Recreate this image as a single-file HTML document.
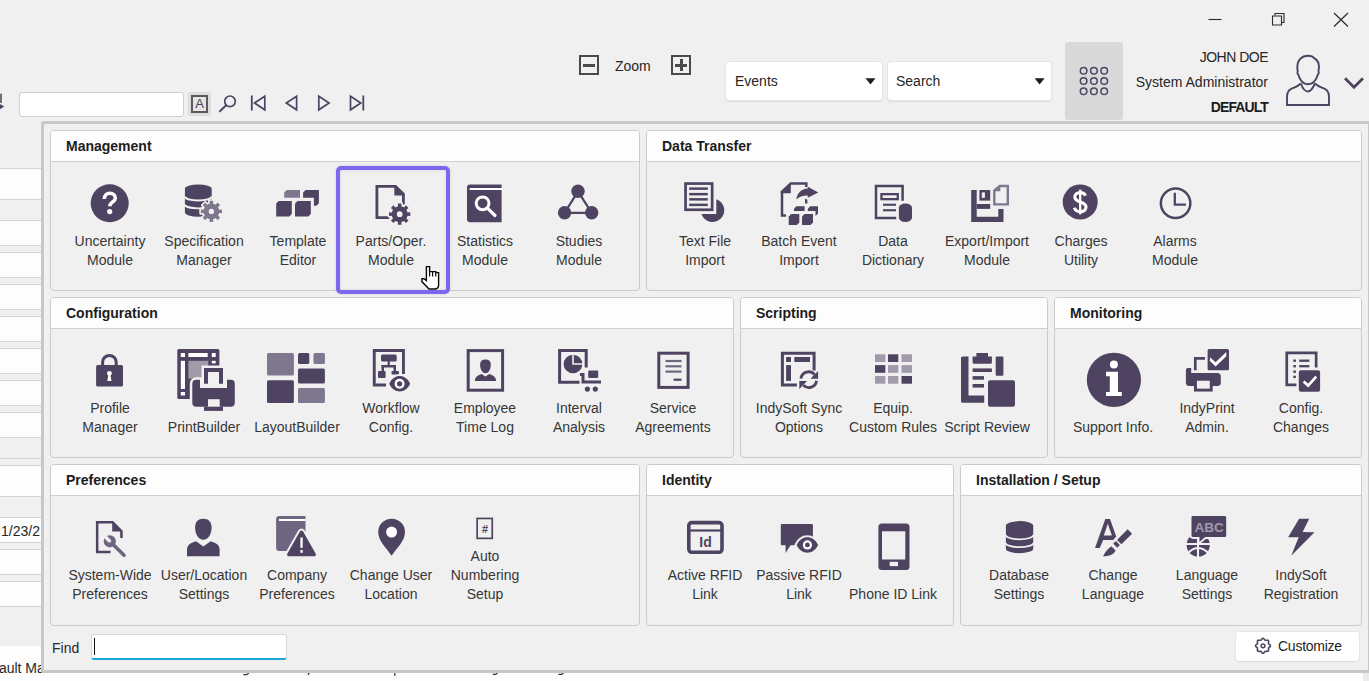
<!DOCTYPE html><html><head><meta charset="utf-8"><style>
*{box-sizing:border-box}
html,body{margin:0;padding:0}
body{width:1369px;height:681px;overflow:hidden;background:#f0f0f0;position:relative;font-family:"Liberation Sans",sans-serif;color:#262626}
.a{position:absolute}
.sec{position:absolute;border:1px solid #cbcbcb;border-radius:4px;background:#f0f0f0;overflow:hidden}
.sec .hd{position:absolute;left:0;top:0;right:0;height:31px;background:#fdfdfd;border-bottom:1px solid #d0d0d0;font-weight:bold;font-size:14px;line-height:30px;padding-left:15px;color:#1c1c1c}
.lbl{position:absolute;width:110px;text-align:center;font-size:14px;line-height:19px;color:#363636;white-space:nowrap}
.row{position:absolute;left:0;width:41px;background:#fdfdfd;border-top:1px solid #d4d4d4;border-bottom:1px solid #d4d4d4}
</style></head><body><div class="a" style="left:0;top:0;width:1369px;height:681px;background:#f0f0f0"></div>
<div class="row" style="top:168px;height:32px"></div>
<div class="row" style="top:220px;height:26px"></div>
<div class="row" style="top:252px;height:26px"></div>
<div class="row" style="top:284px;height:26px"></div>
<div class="row" style="top:316px;height:26px"></div>
<div class="row" style="top:348px;height:26px"></div>
<div class="row" style="top:380px;height:26px"></div>
<div class="row" style="top:412px;height:26px"></div>
<div class="row" style="top:465px;height:32px"></div>
<div class="row" style="top:517px;height:26px"></div>
<div class="row" style="top:549px;height:26px"></div>
<div class="row" style="top:581px;height:26px"></div>
<div class="a" style="left:0;top:199px;width:41px;height:22px;border-top:1px solid #d4d4d4;border-bottom:1px solid #d4d4d4"></div>
<div class="a" style="left:0;top:437px;width:41px;height:22px;border-top:1px solid #d4d4d4;border-bottom:1px solid #d4d4d4"></div>
<div class="a" style="left:0;top:496px;width:41px;height:22px;border-top:1px solid #d4d4d4;border-bottom:1px solid #d4d4d4"></div>
<div class="a" style="left:0;top:646px;width:1369px;height:35px;background:#fdfdfd"></div>
<div class="a" style="left:1363px;top:673px;width:6px;height:8px;background:#ececec"></div>
<div class="a" style="left:1px;top:522px;font-size:14px;line-height:19px;color:#262626">1/23/2</div>
<div class="a" style="left:-5px;top:659px;font-size:14px;line-height:19px;color:#262626">fault Ma</div>
<svg class="a" style="left:0;top:0" width="1369" height="681"><path d="M243.3,674.6 H247 L249,672.6 M308,675 L309.3,672.6 M394.8,672.6 V676 M492.7,674.4 H495.8 L497.6,672.6 M558.4,674.4 H561.8 L563.6,672.6" fill="none" stroke="#333" stroke-width="1.2"/></svg>
<div class="a" style="left:19px;top:92px;width:165px;height:25px;background:#fff;border:1px solid #cfcfcf;border-radius:3px"></div>
<div class="a" style="left:188px;top:92px;width:23px;height:24px;background:#dcdcdc;border-radius:3px"></div>
<div class="a" style="left:191px;top:95px;width:17px;height:18px;border:2px solid #5a5a5a;background:#e4e4e4"></div>
<div class="a" style="left:191px;top:95px;width:17px;height:18px;font-size:13px;line-height:18px;text-align:center;color:#4e4462">A</div>
<div class="a" style="left:579px;top:55px;width:20px;height:20px;border:2px solid #4a4a4a"></div>
<div class="a" style="left:583px;top:63.5px;width:12px;height:3px;background:#4a4a4a"></div>
<div class="a" style="left:671px;top:55px;width:20px;height:20px;border:2px solid #4a4a4a"></div>
<div class="a" style="left:675px;top:63.5px;width:12px;height:3px;background:#4a4a4a"></div>
<div class="a" style="left:679.5px;top:59px;width:3px;height:12px;background:#4a4a4a"></div>
<div class="a" style="left:615px;top:57px;font-size:14px;line-height:19px;color:#262626">Zoom</div>
<div class="a" style="left:726px;top:62px;width:156px;height:38px;background:#fff;border-radius:3px;box-shadow:0 0 0 1px #e6e6e6, 0 1px 1px 1px #dcdcdc"></div>
<div class="a" style="left:735px;top:72px;font-size:14px;line-height:19px;color:#262626">Events</div>
<div class="a" style="left:888px;top:62px;width:163px;height:38px;background:#fff;border-radius:3px;box-shadow:0 0 0 1px #e6e6e6, 0 1px 1px 1px #dcdcdc"></div>
<div class="a" style="left:896px;top:72px;font-size:14px;line-height:19px;color:#262626">Search</div>
<div class="a" style="left:1065px;top:42px;width:58px;height:78px;background:#d9d9d9;border-radius:3px"></div>
<div class="a" style="left:1100px;top:48px;width:168px;text-align:right;font-size:14px;line-height:19px;color:#262626;letter-spacing:-0.5px">JOHN DOE</div>
<div class="a" style="left:1100px;top:73px;width:168px;text-align:right;font-size:14px;line-height:19px;color:#262626">System Administrator</div>
<div class="a" style="left:1100px;top:98px;width:168px;text-align:right;font-size:14px;line-height:19px;font-weight:bold;color:#1c1c1c;letter-spacing:-0.9px">DEFAULT</div>
<div class="a" style="left:41px;top:121px;width:1330px;height:552px;border:3px solid #c8c8c8;border-radius:3px;background:#f0f0f0"></div>
<div class="sec" style="left:50px;top:130px;width:590px;height:161px"><div class="hd">Management</div></div>
<div class="sec" style="left:646px;top:130px;width:716px;height:161px"><div class="hd">Data Transfer</div></div>
<div class="sec" style="left:50px;top:297px;width:684px;height:161px"><div class="hd">Configuration</div></div>
<div class="sec" style="left:740px;top:297px;width:308px;height:161px"><div class="hd">Scripting</div></div>
<div class="sec" style="left:1054px;top:297px;width:308px;height:161px"><div class="hd">Monitoring</div></div>
<div class="sec" style="left:50px;top:464px;width:590px;height:162px"><div class="hd">Preferences</div></div>
<div class="sec" style="left:646px;top:464px;width:308px;height:162px"><div class="hd">Identity</div></div>
<div class="sec" style="left:960px;top:464px;width:402px;height:162px"><div class="hd">Installation / Setup</div></div>
<div class="lbl" style="left:55px;top:231.7px">Uncertainty<br>Module</div>
<div class="lbl" style="left:149px;top:231.7px">Specification<br>Manager</div>
<div class="lbl" style="left:243px;top:231.7px">Template<br>Editor</div>
<div class="lbl" style="left:336px;top:231.7px">Parts/Oper.<br>Module</div>
<div class="lbl" style="left:430px;top:231.7px">Statistics<br>Module</div>
<div class="lbl" style="left:524px;top:231.7px">Studies<br>Module</div>
<div class="lbl" style="left:650px;top:231.7px">Text File<br>Import</div>
<div class="lbl" style="left:744px;top:231.7px">Batch Event<br>Import</div>
<div class="lbl" style="left:838px;top:231.7px">Data<br>Dictionary</div>
<div class="lbl" style="left:932px;top:231.7px">Export/Import<br>Module</div>
<div class="lbl" style="left:1026px;top:231.7px">Charges<br>Utility</div>
<div class="lbl" style="left:1120px;top:231.7px">Alarms<br>Module</div>
<div class="lbl" style="left:55px;top:398.6px">Profile<br>Manager</div>
<div class="lbl" style="left:149px;top:417.6px">PrintBuilder</div>
<div class="lbl" style="left:242px;top:417.6px">LayoutBuilder</div>
<div class="lbl" style="left:336px;top:398.6px">Workflow<br>Config.</div>
<div class="lbl" style="left:430px;top:398.6px">Employee<br>Time Log</div>
<div class="lbl" style="left:524px;top:398.6px">Interval<br>Analysis</div>
<div class="lbl" style="left:618px;top:398.6px">Service<br>Agreements</div>
<div class="lbl" style="left:744px;top:398.6px">IndySoft Sync<br>Options</div>
<div class="lbl" style="left:838px;top:398.6px">Equip.<br>Custom Rules</div>
<div class="lbl" style="left:932px;top:417.6px">Script Review</div>
<div class="lbl" style="left:1058px;top:417.6px">Support Info.</div>
<div class="lbl" style="left:1152px;top:398.6px">IndyPrint<br>Admin.</div>
<div class="lbl" style="left:1246px;top:398.6px">Config.<br>Changes</div>
<div class="lbl" style="left:55px;top:565.6px">System-Wide<br>Preferences</div>
<div class="lbl" style="left:149px;top:565.6px">User/Location<br>Settings</div>
<div class="lbl" style="left:242px;top:565.6px">Company<br>Preferences</div>
<div class="lbl" style="left:336px;top:565.6px">Change User<br>Location</div>
<div class="lbl" style="left:430px;top:546.6px">Auto<br>Numbering<br>Setup</div>
<div class="lbl" style="left:650px;top:565.6px">Active RFID<br>Link</div>
<div class="lbl" style="left:744px;top:565.6px">Passive RFID<br>Link</div>
<div class="lbl" style="left:838px;top:584.6px">Phone ID Link</div>
<div class="lbl" style="left:964px;top:565.6px">Database<br>Settings</div>
<div class="lbl" style="left:1058px;top:565.6px">Change<br>Language</div>
<div class="lbl" style="left:1152px;top:565.6px">Language<br>Settings</div>
<div class="lbl" style="left:1246px;top:565.6px">IndySoft<br>Registration</div>
<div class="a" style="left:336px;top:166px;width:114px;height:128px;border:4px solid #7b68ee;border-radius:5px;box-shadow:0 0 3px rgba(0,0,0,0.12), inset 0 0 3px rgba(0,0,0,0.12)"></div>
<div class="a" style="left:52px;top:638.5px;font-size:14px;line-height:19px;color:#262626">Find</div>
<div class="a" style="left:91px;top:634px;width:196px;height:26px;background:#fff;border:1px solid #d8d8d8;border-bottom:2px solid #1aa7d8;border-radius:3px"></div>
<div class="a" style="left:94px;top:638px;width:1px;height:17px;background:#111"></div>
<div class="a" style="left:1236px;top:632px;width:123px;height:29px;background:#fff;border-radius:3px;box-shadow:0 1px 0 #dcdcdc, 0 0 0 1px #e6e6e6"></div>
<div class="a" style="left:1278px;top:637px;font-size:14px;line-height:19px;color:#262626;letter-spacing:-0.25px">Customize</div>
<svg class="a" style="left:0;top:0" width="1369" height="681" viewBox="0 0 1369 681"><rect x="0" y="93.7" width="2" height="9.3" rx="0" fill="#6a7478" />
<path d="M0,104 L4.2,106.5 L0,109.2 Z" fill="#4e4462" />
<path d="M1208.5,19.5 H1221.5" fill="none" stroke="#2b2b2b" stroke-width="1.1" />
<path d="M1272.5,16 H1281.5 V25 H1272.5 Z" fill="none" stroke="#2b2b2b" stroke-width="1.1" />
<path d="M1275,15.5 V13.5 H1284 V22.5 H1282" fill="none" stroke="#2b2b2b" stroke-width="1.1" />
<path d="M1334,13 L1348,26.5 M1348,13 L1334,26.5" fill="none" stroke="#2b2b2b" stroke-width="1.2" />
<circle cx="1083.6" cy="70.7" r="3.3" fill="none" stroke="#4e4462" stroke-width="1.5"/>
<circle cx="1083.6" cy="81.0" r="3.3" fill="none" stroke="#4e4462" stroke-width="1.5"/>
<circle cx="1083.6" cy="91.30000000000001" r="3.3" fill="none" stroke="#4e4462" stroke-width="1.5"/>
<circle cx="1093.8999999999999" cy="70.7" r="3.3" fill="none" stroke="#4e4462" stroke-width="1.5"/>
<circle cx="1093.8999999999999" cy="81.0" r="3.3" fill="none" stroke="#4e4462" stroke-width="1.5"/>
<circle cx="1093.8999999999999" cy="91.30000000000001" r="3.3" fill="none" stroke="#4e4462" stroke-width="1.5"/>
<circle cx="1104.1999999999998" cy="70.7" r="3.3" fill="none" stroke="#4e4462" stroke-width="1.5"/>
<circle cx="1104.1999999999998" cy="81.0" r="3.3" fill="none" stroke="#4e4462" stroke-width="1.5"/>
<circle cx="1104.1999999999998" cy="91.30000000000001" r="3.3" fill="none" stroke="#4e4462" stroke-width="1.5"/>
<path d="M1308,55.8 C1301.5,55.8 1297.3,60.5 1297.3,67 C1297.3,69 1297.5,70.5 1297.8,71.5 C1297,72.5 1297.5,74 1298.3,74.5 C1300,80.5 1303.5,84.3 1308,84.3 C1312.5,84.3 1316.2,80.5 1317.8,74.5 C1318.6,74 1319.2,72.5 1318.5,71.5 C1319.2,69 1319.2,66 1318.5,63 C1317,60 1316,58.8 1314.5,58.5 C1313,56.5 1310.5,55.8 1308,55.8 Z" fill="none" stroke="#4e4462" stroke-width="1.9" />
<path d="M1300.8,83.5 C1302.5,88 1305,91.5 1307.8,91.5 C1310.5,91.5 1313,88 1315,83.5" fill="none" stroke="#4e4462" stroke-width="1.9" />
<path d="M1300.8,83.5 C1298,86.5 1294,87.5 1291.5,88.7 C1288,90.3 1287,93 1287,97 V105 H1329 V97 C1329,93 1328,90.3 1324.5,88.7 C1322,87.5 1318,86.5 1315,83.5" fill="none" stroke="#4e4462" stroke-width="1.9" />
<path d="M1345,78.3 L1354,87.3 L1363,78.3" fill="none" stroke="#4e4462" stroke-width="2.8" />
<path d="M865.5,78.3 H875.5 L870.5,84.5 Z" fill="#1e1e1e" />
<path d="M1034.6,78.3 H1044.6 L1039.6,84.5 Z" fill="#1e1e1e" />
<circle cx="230" cy="101.3" r="5.3" fill="none" stroke="#4e4462" stroke-width="1.7"/>
<path d="M226.2,105.3 L219.3,111.7" fill="none" stroke="#4e4462" stroke-width="1.9" />
<path d="M251.8,95.5 V110.5" fill="none" stroke="#4e4462" stroke-width="1.8" />
<path d="M264.8,96.2 L254.5,103 L264.8,109.8 Z" fill="none" stroke="#4e4462" stroke-width="1.7" stroke-linejoin="miter"/>
<path d="M296.6,96.2 L286.3,103 L296.6,109.8 Z" fill="none" stroke="#4e4462" stroke-width="1.7" />
<path d="M318.8,96.2 L329.1,103 L318.8,109.8 Z" fill="none" stroke="#4e4462" stroke-width="1.7" />
<path d="M350.5,96.2 L360.8,103 L350.5,109.8 Z" fill="none" stroke="#4e4462" stroke-width="1.7" />
<path d="M363.3,95.5 V110.5" fill="none" stroke="#4e4462" stroke-width="1.8" />
<circle cx="109.7" cy="203.3" r="19" fill="#4e4462" />
<path d="M104.3,199 C104.3,195.2 106.8,193.2 109.8,193.2 C113,193.2 115.3,195.2 115.3,198.2 C115.3,201.8 109.8,202 109.8,206.2" fill="none" stroke="#ffffff" stroke-width="3.6" />
<circle cx="109.7" cy="211.6" r="2.6" fill="#ffffff" />
<path d="M184.9,188.7 A13.4,4.1 0 0 1 211.7,188.7 V212.6 A13.4,4.1 0 0 1 184.9,212.6 Z" fill="#4e4462" />
<path d="M184.5,196.6 A13.8,4.3 0 0 0 212,196.6" fill="none" stroke="#f0f0f0" stroke-width="1.9" />
<path d="M184.5,204.4 A13.8,4.3 0 0 0 212,204.4" fill="none" stroke="#f0f0f0" stroke-width="1.9" />
<path d="M208.38,204.10 L209.81,203.66 L209.52,200.87 L213.28,200.87 L212.99,203.66 L214.42,204.10 L215.74,204.80 L217.52,202.62 L220.18,205.28 L218.00,207.06 L218.70,208.38 L219.14,209.81 L221.93,209.52 L221.93,213.28 L219.14,212.99 L218.70,214.42 L218.00,215.74 L220.18,217.52 L217.52,220.18 L215.74,218.00 L214.42,218.70 L212.99,219.14 L213.28,221.93 L209.52,221.93 L209.81,219.14 L208.38,218.70 L207.06,218.00 L205.28,220.18 L202.62,217.52 L204.80,215.74 L204.10,214.42 L203.66,212.99 L200.87,213.28 L200.87,209.52 L203.66,209.81 L204.10,208.38 L204.80,207.06 L202.62,205.28 L205.28,202.62 L207.06,204.80 Z" fill="#f0f0f0" stroke="#f0f0f0" stroke-width="3.2" stroke-linejoin="round"/>
<path d="M208.38,204.10 L209.81,203.66 L209.52,200.87 L213.28,200.87 L212.99,203.66 L214.42,204.10 L215.74,204.80 L217.52,202.62 L220.18,205.28 L218.00,207.06 L218.70,208.38 L219.14,209.81 L221.93,209.52 L221.93,213.28 L219.14,212.99 L218.70,214.42 L218.00,215.74 L220.18,217.52 L217.52,220.18 L215.74,218.00 L214.42,218.70 L212.99,219.14 L213.28,221.93 L209.52,221.93 L209.81,219.14 L208.38,218.70 L207.06,218.00 L205.28,220.18 L202.62,217.52 L204.80,215.74 L204.10,214.42 L203.66,212.99 L200.87,213.28 L200.87,209.52 L203.66,209.81 L204.10,208.38 L204.80,207.06 L202.62,205.28 L205.28,202.62 L207.06,204.80 Z M214.10,211.40 A2.7,2.7 0 1 0 208.70,211.40 A2.7,2.7 0 1 0 214.10,211.40 Z" fill="#7f778e" fill-rule="evenodd"/>
<path d="M284.2,197.7 V192.5 L286.7,190 H300 V197.7 Z" fill="#7f778e" />
<path d="M303.1,197.7 V192.5 L305.6,190 H318.9 V203.3 L316.4,205.8 H313.9 V197.7 Z" fill="#4e4462" />
<path d="M276.2,216.6 V203.5 L278.7,201 H291.8 V214.1 L289.3,216.6 Z" fill="#4e4462" />
<path d="M295,216.6 V203.5 L297.5,201 H310.8 V214.1 L308.3,216.6 Z" fill="#4e4462" />
<path d="M389.3,217.7 H376.9 V186.3 H395.5 L403.4,194.2 V204.5" fill="none" stroke="#4e4462" stroke-width="2.8" />
<path d="M394.3,185 L404.8,195.5 H394.3 Z" fill="#4e4462" />
<path d="M396.64,206.81 L398.09,206.36 L397.80,203.57 L401.60,203.57 L401.31,206.36 L402.76,206.81 L404.10,207.52 L405.88,205.34 L408.56,208.02 L406.38,209.80 L407.09,211.14 L407.54,212.59 L410.33,212.30 L410.33,216.10 L407.54,215.81 L407.09,217.26 L406.38,218.60 L408.56,220.38 L405.88,223.06 L404.10,220.88 L402.76,221.59 L401.31,222.04 L401.60,224.83 L397.80,224.83 L398.09,222.04 L396.64,221.59 L395.30,220.88 L393.52,223.06 L390.84,220.38 L393.02,218.60 L392.31,217.26 L391.86,215.81 L389.07,216.10 L389.07,212.30 L391.86,212.59 L392.31,211.14 L393.02,209.80 L390.84,208.02 L393.52,205.34 L395.30,207.52 Z" fill="#f0f0f0" stroke="#f0f0f0" stroke-width="3" stroke-linejoin="round"/>
<path d="M396.64,206.81 L398.09,206.36 L397.80,203.57 L401.60,203.57 L401.31,206.36 L402.76,206.81 L404.10,207.52 L405.88,205.34 L408.56,208.02 L406.38,209.80 L407.09,211.14 L407.54,212.59 L410.33,212.30 L410.33,216.10 L407.54,215.81 L407.09,217.26 L406.38,218.60 L408.56,220.38 L405.88,223.06 L404.10,220.88 L402.76,221.59 L401.31,222.04 L401.60,224.83 L397.80,224.83 L398.09,222.04 L396.64,221.59 L395.30,220.88 L393.52,223.06 L390.84,220.38 L393.02,218.60 L392.31,217.26 L391.86,215.81 L389.07,216.10 L389.07,212.30 L391.86,212.59 L392.31,211.14 L393.02,209.80 L390.84,208.02 L393.52,205.34 L395.30,207.52 Z M402.60,214.20 A2.9,2.9 0 1 0 396.80,214.20 A2.9,2.9 0 1 0 402.60,214.20 Z" fill="#4e4462" fill-rule="evenodd"/>
<path d="M470,184.6 H501.6 V222.3 H470 A3,3 0 0 1 467,219.3 V187.6 A3,3 0 0 1 470,184.6 Z" fill="#4e4462" />
<path d="M470.5,189 H501.8" fill="none" stroke="#ffffff" stroke-width="2.2" stroke-linecap="round"/>
<circle cx="482.6" cy="203.3" r="6.4" fill="none" stroke="#ffffff" stroke-width="3"/>
<path d="M487.4,208.2 L495,215.5" fill="none" stroke="#ffffff" stroke-width="3.2" stroke-linecap="round"/>
<path d="M578,191.3 L564.6,212.8 H591.7 Z" fill="none" stroke="#4e4462" stroke-width="2.2" />
<circle cx="578" cy="191.3" r="6.7" fill="#4e4462" />
<circle cx="564.6" cy="212.8" r="6.7" fill="#4e4462" />
<circle cx="591.7" cy="212.8" r="6.7" fill="#4e4462" />
<rect x="685.55" y="183.55" width="26.6" height="26.2" rx="0" fill="none" stroke="#4e4462" stroke-width="2.7"/>
<rect x="689.2" y="187.4" width="18.6" height="2.5" rx="0" fill="#4e4462" />
<rect x="689.2" y="192.9" width="18.6" height="2.5" rx="0" fill="#4e4462" />
<rect x="689.2" y="198.1" width="18.6" height="2.5" rx="0" fill="#4e4462" />
<rect x="689.2" y="203.6" width="18.6" height="2.5" rx="0" fill="#4e4462" />
<path d="M716.3,199.2 A11.7,11.7 0 1 1 701.5,214 H716.3 Z" fill="#4e4462" />
<path d="M786,215.6 H782 V191.8 L790.8,183.4 H806.3 V187" fill="none" stroke="#4e4462" stroke-width="2.5" />
<path d="M790.8,182.2 V193.2 H780.7 V191.6 Z" fill="#4e4462" />
<path d="M796.3,199.6 C797.3,192.5 801.8,189 807.8,188.6 V186.8 L818.3,192.4 L807.8,197.8 V195.6 C803,195.5 799,196.8 796.3,199.6 Z" fill="#4e4462" />
<path d="M805,198.4 L807.4,199.8 V203.4 H805 Z" fill="#4e4462" />
<path d="M794,211.1 V208.7 L796.4,206.2 H804.6 V211.1 Z" fill="#4e4462" />
<path d="M807.8,211.1 V208.7 L810.2,206.2 H818 V213.5 L815.5,216 V211.1 Z" fill="#4e4462" />
<path d="M788.7,224.9 V216.5 L791.2,214 H799.3 V222.4 L796.8,224.9 Z" fill="#4e4462" />
<path d="M802,224.9 V216.5 L804.5,214 H813 V222.4 L810.5,224.9 Z" fill="#4e4462" />
<path d="M896.2,218.1 H876 V186.1 H902.6 V200.7" fill="none" stroke="#4e4462" stroke-width="2.5" />
<rect x="881.45" y="194.15" width="16.3" height="5" rx="0" fill="none" stroke="#4e4462" stroke-width="2.3"/>
<rect x="883" y="203.7" width="13" height="2.1" rx="0" fill="#4e4462" />
<rect x="883" y="209.2" width="13" height="2.1" rx="0" fill="#4e4462" />
<rect x="898.9" y="203.4" width="13.1" height="18.6" rx="6.5" ry="4.2" fill="#f0f0f0" stroke="#f0f0f0" stroke-width="3.0"/>
<rect x="898.9" y="203.4" width="13.1" height="18.6" rx="6.5" ry="4.2" fill="#4e4462"/>
<path d="M971.2,190 H976.7 V216.8 H998.3 V208.9 H1003.5 V222 H971.2 Z" fill="#4e4462" />
<rect x="979.4" y="190" width="10.8" height="10.6" rx="0" fill="#4e4462" />
<rect x="981.8" y="192.4" width="3.1" height="5.5" rx="0" fill="#f0f0f0" />
<rect x="976.7" y="204" width="13.5" height="4.9" rx="0" fill="#4e4462" />
<path d="M994.3,204.4 V190.6 L999.8,186 H1007.8 V204.4 Z" fill="none" stroke="#7f778e" stroke-width="2.4" />
<path d="M1000.3,184.8 V191.2 H993.6 Z" fill="#7f778e" />
<circle cx="1080.2" cy="202" r="17.5" fill="#4e4462" />
<path d="M1085.6,195.6 C1084.6,193.4 1082.6,192.6 1080.2,192.6 C1076.8,192.6 1074.8,194.5 1074.8,197 C1074.8,203.2 1086,200.8 1086,207.1 C1086,209.9 1083.6,211.6 1080.2,211.6 C1077.2,211.6 1075.2,210.2 1074.3,207.7" fill="none" stroke="#ffffff" stroke-width="3.1" />
<path d="M1080.2,189.6 V214.4" fill="none" stroke="#ffffff" stroke-width="2.3" />
<circle cx="1175.6" cy="203.2" r="14.75" fill="none" stroke="#4e4462" stroke-width="2.5"/>
<path d="M1174.8,192.8 V204.7 H1186" fill="none" stroke="#4e4462" stroke-width="2.3" />
<path d="M102.6,366.5 V362.2 A6.8,6.8 0 0 1 116.2,362.2 V366.5" fill="none" stroke="#4e4462" stroke-width="3" />
<rect x="96.1" y="365.1" width="26.9" height="21.4" rx="1.5" fill="#4e4462" />
<circle cx="109.4" cy="373.3" r="2.4" fill="#ffffff" />
<path d="M108.4,374.5 H110.4 L111.5,380.9 H107.3 Z" fill="#ffffff" />
<rect x="177.3" y="349.1" width="42.1" height="49.9" rx="1.5" fill="#4e4462" />
<rect x="180.8" y="353" width="4.2" height="4" rx="0" fill="#ffffff" />
<rect x="188.4" y="353" width="19.3" height="4" rx="0" fill="#ffffff" />
<rect x="211.8" y="353" width="3.9" height="4" rx="0" fill="#ffffff" />
<rect x="180.8" y="360.8" width="4.2" height="28.2" rx="0" fill="#ffffff" />
<rect x="180.8" y="392" width="4.2" height="3.5" rx="0" fill="#ffffff" />
<rect x="211.8" y="360.8" width="3.9" height="2.6" rx="0" fill="#ffffff" />
<rect x="188.4" y="360.8" width="19.9" height="17.8" rx="0" fill="#a09aaa" />
<path d="M196.3,379.7 H230.8 A4,4 0 0 1 234.8,383.7 V402.8 A4,4 0 0 1 230.8,406.8 H196.3 A4,4 0 0 1 192.3,402.8 V383.7 A4,4 0 0 1 196.3,379.7 Z M204,368.1 H223 V383 H204 Z" fill="#f0f0f0" stroke="#f0f0f0" stroke-width="5"/>
<path d="M196.3,379.7 H200 V387.9 H227 V379.7 H230.8 A4,4 0 0 1 234.8,383.7 V402.8 A4,4 0 0 1 230.8,406.8 H196.3 A4,4 0 0 1 192.3,402.8 V383.7 A4,4 0 0 1 196.3,379.7 Z" fill="#4e4462" />
<path d="M206,383.8 V370.1 H221 V383.8" fill="none" stroke="#4e4462" stroke-width="4" />
<rect x="208" y="399.2" width="11.7" height="7.6" rx="0" fill="#f0f0f0" />
<rect x="204" y="406.8" width="19" height="4.1" rx="0" fill="#4e4462" />
<rect x="267" y="353.1" width="26.9" height="22.5" rx="1.5" fill="#7f778e" />
<rect x="298" y="353.1" width="11.3" height="10.9" rx="1.5" fill="#4e4462" />
<rect x="313.5" y="353.1" width="11.4" height="10.9" rx="1.5" fill="#7f778e" />
<rect x="298" y="368.6" width="26.9" height="14.9" rx="1.5" fill="#4e4462" />
<rect x="267" y="380.3" width="26.9" height="22.6" rx="1.5" fill="#4e4462" />
<rect x="298" y="387.9" width="26.9" height="15" rx="1.5" fill="#7f778e" />
<path d="M386,385.05 H374.25 V350.55 H403.45 V373.9" fill="none" stroke="#4e4462" stroke-width="2.9" />
<rect x="381" y="354.6" width="15.7" height="7" rx="1.5" fill="#4e4462" />
<rect x="387.6" y="361" width="2.2" height="4.5" rx="0" fill="#4e4462" />
<rect x="381.5" y="365" width="14.5" height="2.5" rx="0" fill="#4e4462" />
<rect x="381.5" y="365" width="2.5" height="6" rx="0" fill="#4e4462" />
<rect x="393.5" y="365" width="2.5" height="6" rx="0" fill="#4e4462" />
<rect x="378" y="371" width="7.6" height="7" rx="1" fill="#4e4462" />
<rect x="391.5" y="371" width="7.5" height="3.5" rx="1" fill="#4e4462" />
<path d="M389.2,383.8 C394,373.5 405.4,373.5 410.2,383.8 C405.4,394.1 394,394.1 389.2,383.8 Z" fill="#f0f0f0" stroke="#f0f0f0" stroke-width="3.6" stroke-linejoin="round"/>
<path d="M389.2,383.8 C394,373.5 405.4,373.5 410.2,383.8 C405.4,394.1 394,394.1 389.2,383.8 Z" fill="#4e4462" />
<circle cx="399.6" cy="383.8" r="5" fill="#ffffff" />
<circle cx="399.6" cy="383.8" r="2.6" fill="#4e4462" />
<rect x="468.2" y="350.6" width="34.4" height="39.6" rx="0" fill="none" stroke="#4e4462" stroke-width="3"/>
<path d="M485.4,359.6 C489,359.6 490.8,361.5 490.8,364.5 C490.8,369.5 488.5,373.3 485.4,373.3 C482.3,373.3 480.1,369.5 480.1,364.5 C480.1,361.5 481.8,359.6 485.4,359.6 Z" fill="#4e4462" />
<path d="M474.9,380.9 C475,377 477.5,375.5 481.5,374 L485.4,376.5 L489.3,374 C493.5,375.5 496,377 496.1,380.9 Z" fill="#4e4462" />
<path d="M579.5,382.3 H559.6 V350.6 H586.2 V367.5" fill="none" stroke="#4e4462" stroke-width="3" />
<circle cx="573" cy="364" r="9.35" fill="#4e4462" />
<path d="M573,353.5 V364 H583.5" fill="none" stroke="#f0f0f0" stroke-width="1.6" />
<path d="M580,374.5 H583 V382 H601" fill="none" stroke="#4e4462" stroke-width="3" />
<rect x="588.2" y="370.4" width="10" height="7.6" rx="1" fill="#4e4462" />
<circle cx="587.4" cy="389.1" r="2.6" fill="#4e4462" />
<circle cx="595.3" cy="389.1" r="2.6" fill="#4e4462" />
<rect x="658.8" y="353.2" width="29.3" height="34.2" rx="0" fill="none" stroke="#4e4462" stroke-width="3"/>
<rect x="665.5" y="359.9" width="16" height="2.2" rx="0" fill="#6e6680" />
<rect x="665.5" y="365.2" width="16" height="2.2" rx="0" fill="#6e6680" />
<rect x="665.5" y="370.5" width="16" height="2.2" rx="0" fill="#6e6680" />
<rect x="673.6" y="378.6" width="7.9" height="2.2" rx="0" fill="#4e4462" />
<path d="M796.9,385 H782.4 V353.2 H814.1 V370.4" fill="none" stroke="#4e4462" stroke-width="3" />
<rect x="786.1" y="357" width="4.9" height="5" rx="0" fill="#4e4462" />
<rect x="794.3" y="357" width="15.7" height="5" rx="0" fill="#4e4462" />
<rect x="786.1" y="365.1" width="4.9" height="15.8" rx="0" fill="#4e4462" />
<circle cx="808.9" cy="379.7" r="10" fill="#f0f0f0" />
<path d="M800.9,378.6 A7.8,7.8 0 0 1 814.6,374.6" fill="none" stroke="#4e4462" stroke-width="2.8" />
<path d="M818.1,370.9 V378.7 H810.4 Z" fill="#4e4462" />
<path d="M816.6,380.8 A7.8,7.8 0 0 1 803.4,385.3" fill="none" stroke="#4e4462" stroke-width="2.8" />
<path d="M799.3,381.1 H807.1 L799.3,389 Z" fill="#4e4462" />
<rect x="875" y="354.3" width="10.3" height="7.7" rx="0" fill="#a09aaa" />
<rect x="888" y="354.3" width="10.3" height="7.7" rx="0" fill="#4e4462" />
<rect x="901.5" y="354.3" width="10.5" height="7.7" rx="0" fill="#a09aaa" />
<rect x="875" y="365.1" width="10.3" height="7.7" rx="0" fill="#4e4462" />
<rect x="888" y="365.1" width="10.3" height="7.7" rx="0" fill="#a09aaa" />
<rect x="901.5" y="365.1" width="10.5" height="7.7" rx="0" fill="#a09aaa" />
<rect x="875" y="376" width="10.3" height="7.7" rx="0" fill="#a09aaa" />
<rect x="888" y="376" width="10.3" height="7.7" rx="0" fill="#a09aaa" />
<rect x="901.5" y="376" width="10.5" height="7.7" rx="0" fill="#4e4462" />
<path d="M962.5,356.5 H968.5 V395.6 H984.2 V402.8 H962.5 A1.5,1.5 0 0 1 961,401.3 V358 A1.5,1.5 0 0 1 962.5,356.5 Z" fill="#4e4462" />
<path d="M976.4,353 H988 V356.5 H991.9 V362.2 A1.5,1.5 0 0 1 990.4,363.7 H974.1 A1.5,1.5 0 0 1 972.6,362.2 V356.5 H976.4 Z" fill="#4e4462" />
<rect x="995.7" y="356.5" width="7.7" height="19.3" rx="1" fill="#4e4462" />
<rect x="972.6" y="368.4" width="19.3" height="3.6" rx="0" fill="#4e4462" />
<rect x="972.6" y="376.1" width="11.4" height="3.6" rx="0" fill="#4e4462" />
<rect x="972.6" y="384" width="11.4" height="3.6" rx="0" fill="#4e4462" />
<rect x="988" y="380.2" width="27" height="26.5" rx="2" fill="#4e4462" />
<circle cx="1113.9" cy="379.9" r="27.1" fill="#4e4462" />
<circle cx="1113.9" cy="364.4" r="4" fill="#ffffff" />
<path d="M1106,371.8 H1118 V392 H1121.8 V395.9 H1106 V392 H1109.8 V376.2 H1106 Z" fill="#ffffff" />
<path d="M1195.3,370.3 V358.4 H1205" fill="none" stroke="#4e4462" stroke-width="2.7" />
<path d="M1188,368.1 H1191.2 V372.9 H1217.3 A3.5,3.5 0 0 1 1220.8,376.4 V382.6 A3.5,3.5 0 0 1 1217.3,386.1 H1189.4 A3.5,3.5 0 0 1 1185.9,382.6 V370.2 A2.1,2.1 0 0 1 1188,368.1 Z" fill="#4e4462" />
<rect x="1195.45" y="379.3" width="15.8" height="10.8" rx="0" fill="#f0f0f0" stroke="#4e4462" stroke-width="2.9"/>
<rect x="1207.6" y="349.1" width="21.4" height="21.1" rx="1.5"  fill="#f0f0f0" stroke="#f0f0f0" stroke-width="3.2"/>
<rect x="1207.6" y="349.1" width="21.4" height="21.1" rx="1.5"  fill="#4e4462"/>
<path d="M1209.9,357.2 L1215.6,362.3 L1226.3,352 V356.3 L1215.6,366.5 L1209.9,361 Z" fill="#ffffff" />
<path d="M1296.4,384.85 H1286.75 V352.95 H1316.15 V367.5" fill="none" stroke="#4e4462" stroke-width="2.7" />
<rect x="1293.3" y="359.5" width="2.6" height="2.4" rx="0" fill="#4e4462" />
<rect x="1293.3" y="365.0" width="2.6" height="2.4" rx="0" fill="#4e4462" />
<rect x="1293.3" y="370.5" width="2.6" height="2.4" rx="0" fill="#4e4462" />
<rect x="1293.3" y="375.7" width="2.6" height="2.4" rx="0" fill="#4e4462" />
<rect x="1299.2" y="359.55" width="10.2" height="2.3" rx="0" fill="#4e4462" />
<rect x="1299.2" y="365.05" width="10.2" height="2.3" rx="0" fill="#4e4462" />
<rect x="1298.8" y="370.3" width="21.3" height="21.4" rx="2"  fill="#f0f0f0" stroke="#f0f0f0" stroke-width="3.6"/>
<rect x="1298.8" y="370.3" width="21.3" height="21.4" rx="2"  fill="#4e4462"/>
<path d="M1303.6,381.4 L1308.2,385.6 L1316.2,376.6" fill="none" stroke="#ffffff" stroke-width="2.7" />
<path d="M110.5,552 H97.15 V522.35 H112.6 L121.45,531.2 V538" fill="none" stroke="#4e4462" stroke-width="2.5" />
<path d="M112.2,521.1 L122.7,531.6 H112.2 Z" fill="#4e4462" />
<path d="M109.8,541.3 L124,555.2" fill="none" stroke="#f0f0f0" stroke-width="7" stroke-linecap="round"/>
<circle cx="109.8" cy="541.3" r="8.2" fill="#f0f0f0" />
<path d="M109.8,541.3 L124,555.2" fill="none" stroke="#6e6680" stroke-width="3.6" stroke-linecap="round"/>
<circle cx="109.8" cy="541.3" r="6.1" fill="#6e6680" />
<path d="M109.8,541.3 L104,535.5" fill="none" stroke="#f0f0f0" stroke-width="3.4" />
<circle cx="109.8" cy="541.3" r="1.2" fill="#f0f0f0" />
<path d="M187,556.2 V549.5 C187,545 190,543.3 196,541.2 L203.3,546.6 L210.6,541.2 C216.6,543.3 219.6,545 219.6,549.5 V556.2 Z" fill="#4e4462" />
<path d="M203.3,518.7 C208.5,518.7 211.6,522 211.6,527.5 C211.6,534.5 208,539.7 203.3,539.7 C198.6,539.7 195.1,534.5 195.1,527.5 C195.1,522 198.1,518.7 203.3,518.7 Z" fill="#f0f0f0" stroke="#f0f0f0" stroke-width="2.4" stroke-linejoin="round"/>
<path d="M203.3,518.7 C208.5,518.7 211.6,522 211.6,527.5 C211.6,534.5 208,539.7 203.3,539.7 C198.6,539.7 195.1,534.5 195.1,527.5 C195.1,522 198.1,518.7 203.3,518.7 Z" fill="#4e4462" />
<path d="M279.1,515.9 H305.5 V550.9 H279.1 A3,3 0 0 1 276.1,547.9 V518.9 A3,3 0 0 1 279.1,515.9 Z" fill="#6e6680" />
<path d="M279,520 H305.6" fill="none" stroke="#ffffff" stroke-width="2" />
<path d="M299.9,531.6 Q301.5,529.4 303.1,531.6 L315.6,553.6 Q316.6,556.2 314.2,556.2 H288.8 Q286.4,556.2 287.4,553.6 Z" fill="#f0f0f0" stroke="#f0f0f0" stroke-width="4" stroke-linejoin="round"/>
<path d="M299.9,531.6 Q301.5,529.4 303.1,531.6 L315.6,553.6 Q316.6,556.2 314.2,556.2 H288.8 Q286.4,556.2 287.4,553.6 Z" fill="#4e4462" />
<rect x="300.4" y="537.5" width="2.3" height="10.3" rx="0" fill="#ffffff" />
<rect x="300.4" y="550" width="2.3" height="2.8" rx="0" fill="#ffffff" />
<path d="M391.6,555.8 C386.5,548.3 378.2,541 378.2,532.1 A13.4,13.4 0 0 1 405,532.1 C405,541 396.7,548.3 391.6,555.8 Z" fill="#4e4462" />
<circle cx="391.6" cy="532.1" r="5.5" fill="#ffffff" />
<rect x="477.15" y="518.45" width="15.1" height="19.9" rx="0" fill="none" stroke="#4e4462" stroke-width="1.7"/>
<text x="484.9" y="532.8" font-family="Liberation Sans" font-weight="bold" font-style="italic" font-size="11" text-anchor="middle" fill="#4e4462">#</text>
<rect x="688.8" y="522.6" width="33.2" height="29.7" rx="3" fill="none" stroke="#4e4462" stroke-width="3.6"/>
<rect x="688" y="529.4" width="34.5" height="2.2" rx="0" fill="#4e4462" />
<text x="705.5" y="546.5" font-family="Liberation Sans" font-weight="bold" font-size="14" text-anchor="middle" fill="#4e4462">Id</text>
<path d="M782,523.9 H811.7 A1.2,1.2 0 0 1 812.9,525.1 V545.3 H790.5 L785.6,553 V545.3 H782 A1.2,1.2 0 0 1 780.8,544.1 V525.1 A1.2,1.2 0 0 1 782,523.9 Z" fill="#4e4462" />
<path d="M796.6,544.9 C801.5,534.6 813.2,534.6 818.1,544.9 C813.2,555.2 801.5,555.2 796.6,544.9 Z" fill="#f0f0f0" stroke="#f0f0f0" stroke-width="4" stroke-linejoin="round"/>
<path d="M796.6,544.9 C801.5,534.6 813.2,534.6 818.1,544.9 C813.2,555.2 801.5,555.2 796.6,544.9 Z" fill="#4e4462" />
<circle cx="807.4" cy="544.9" r="4.6" fill="#ffffff" />
<circle cx="807.4" cy="544.9" r="2.4" fill="#4e4462" />
<rect x="878.4" y="523.6" width="31.1" height="46.5" rx="3.5" fill="#4e4462" />
<rect x="882" y="531.3" width="23.3" height="28.2" rx="0" fill="#f0f0f0" />
<rect x="889.7" y="561.8" width="8.3" height="4.3" rx="0" fill="#f0f0f0" />
<path d="M1005.9,525.6 A13.65,4.5 0 0 1 1033.2,525.6 V548.7 A13.65,4.5 0 0 1 1005.9,548.7 Z" fill="#4e4462" />
<path d="M1005.5,534.8 A14,4.5 0 0 0 1033.6,534.8" fill="none" stroke="#f0f0f0" stroke-width="1.8" />
<path d="M1005.5,542.7 A14,4.5 0 0 0 1033.6,542.7" fill="none" stroke="#f0f0f0" stroke-width="1.8" />
<path d="M1095,548 L1105.3,519 H1110 L1116.2,536.5 L1113.2,540 H1103.2 L1099.7,548 Z M1107.8,523.7 L1103.8,535.5 H1111.9 Z" fill="#4e4462" fill-rule="evenodd"/>
<path d="M1127.6,529.3 L1132.1,533.7 L1121.4,544.3 L1117,539.9 Z" fill="#4e4462" />
<path d="M1115.9,541 L1119.9,545.1 L1117.3,547.8 L1113.2,543.7 Z" fill="#4e4462" />
<path d="M1111.3,546.3 L1115.6,550.5 C1113.5,555 1108.5,556.3 1103,556.2 C1105,552.5 1107.5,549 1111.3,546.3 Z" fill="#4e4462" />
<circle cx="1198.2" cy="545" r="11.6" fill="#4e4462" />
<path d="M1186,544 H1210.4 M1198,534 V558 M1187.5,553.5 Q1198,542.5 1208.9,553.5" fill="none" stroke="#f0f0f0" stroke-width="2.1" />
<path d="M1192.5,516.1 H1224.7 A1.5,1.5 0 0 1 1226.2,517.6 V535.6 A1.5,1.5 0 0 1 1224.7,537.1 H1205.2 L1199.5,542 V537.1 H1193 A1.5,1.5 0 0 1 1191.5,535.6 V517.6 A1.5,1.5 0 0 1 1192.5,516.1 Z" fill="#f0f0f0" stroke="#f0f0f0" stroke-width="3.6" stroke-linejoin="round"/>
<path d="M1192.5,516.1 H1224.7 A1.5,1.5 0 0 1 1226.2,517.6 V535.6 A1.5,1.5 0 0 1 1224.7,537.1 H1205.2 L1199.5,542 V537.1 H1193 A1.5,1.5 0 0 1 1191.5,535.6 V517.6 A1.5,1.5 0 0 1 1192.5,516.1 Z" fill="#4e4462" />
<text x="1209.2" y="531.8" font-family="Liberation Sans" font-weight="bold" font-size="13.6" text-anchor="middle" fill="#a09aaa">ABC</text>
<path d="M1299.1,518.7 H1309.2 L1302.6,531.9 L1314.5,532.3 L1291.2,555.7 L1298.7,537.2 H1288.1 Z" fill="#4e4462" />
<path d="M1263.00,638.35 L1263.48,638.47 L1263.92,638.79 L1264.31,639.23 L1264.64,639.69 L1264.94,640.07 L1265.28,640.30 L1265.68,640.37 L1266.16,640.32 L1266.72,640.23 L1267.31,640.19 L1267.85,640.27 L1268.27,640.53 L1268.53,640.95 L1268.61,641.49 L1268.57,642.08 L1268.48,642.64 L1268.43,643.12 L1268.50,643.52 L1268.73,643.86 L1269.11,644.16 L1269.57,644.49 L1270.01,644.88 L1270.33,645.32 L1270.45,645.80 L1270.33,646.28 L1270.01,646.72 L1269.57,647.11 L1269.11,647.44 L1268.73,647.74 L1268.50,648.08 L1268.43,648.48 L1268.48,648.96 L1268.57,649.52 L1268.61,650.11 L1268.53,650.65 L1268.27,651.07 L1267.85,651.33 L1267.31,651.41 L1266.72,651.37 L1266.16,651.28 L1265.68,651.23 L1265.28,651.30 L1264.94,651.53 L1264.64,651.91 L1264.31,652.37 L1263.92,652.81 L1263.48,653.13 L1263.00,653.25 L1262.52,653.13 L1262.08,652.81 L1261.69,652.37 L1261.36,651.91 L1261.06,651.53 L1260.72,651.30 L1260.32,651.23 L1259.84,651.28 L1259.28,651.37 L1258.69,651.41 L1258.15,651.33 L1257.73,651.07 L1257.47,650.65 L1257.39,650.11 L1257.43,649.52 L1257.52,648.96 L1257.57,648.48 L1257.50,648.08 L1257.27,647.74 L1256.89,647.44 L1256.43,647.11 L1255.99,646.72 L1255.67,646.28 L1255.55,645.80 L1255.67,645.32 L1255.99,644.88 L1256.43,644.49 L1256.89,644.16 L1257.27,643.86 L1257.50,643.52 L1257.57,643.12 L1257.52,642.64 L1257.43,642.08 L1257.39,641.49 L1257.47,640.95 L1257.73,640.53 L1258.15,640.27 L1258.69,640.19 L1259.28,640.23 L1259.84,640.32 L1260.32,640.37 L1260.72,640.30 L1261.06,640.07 L1261.36,639.69 L1261.69,639.23 L1262.08,638.79 L1262.52,638.47 Z" fill="none" stroke="#4e4462" stroke-width="1.6" stroke-linejoin="round"/>
<circle cx="1263" cy="645.8" r="1.9" fill="none" stroke="#4e4462" stroke-width="1.5"/>
<path d="M426.4,266.6 H429.6 V271.6 H435.8 V272.6 H438.6 V285 Q438.6,289 434.5,289 H429 L421.9,281.6 V278.7 H424 L426.4,280.6 Z" fill="#ffffff" stroke="#0a0a0a" stroke-width="1.4" stroke-linejoin="miter"/>
<path d="M429.6,271.6 V276.6 M432.6,271.6 V276.6 M435.7,272.2 V276.6" fill="none" stroke="#0a0a0a" stroke-width="1.2" /></svg></body></html>
